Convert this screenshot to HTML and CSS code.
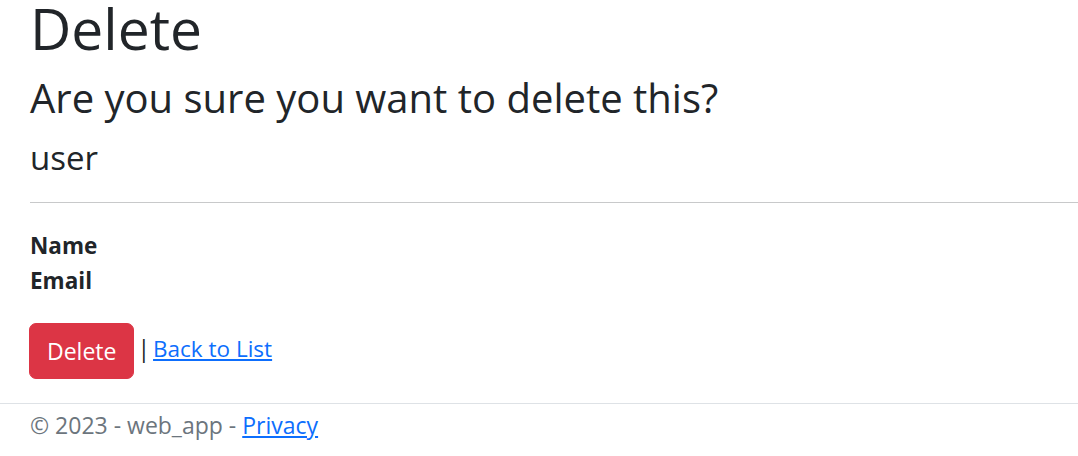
FILE: index.html
```html
<!DOCTYPE html>
<html lang="en">
<head>
<meta charset="utf-8">
<title>Delete - web_app</title>
<link rel="stylesheet" href="styles.css">
</head>
<body>
<main class="container">
  <h1 class="title">Delete</h1>
  <h3 class="question">Are you sure you want to delete this?</h3>
  <div class="details">
    <h4 class="entity">user</h4>
    <hr class="rule">
    <dl class="fields">
      <dt>Name</dt>
      <dd></dd>
      <dt>Email</dt>
      <dd></dd>
    </dl>
    <form class="actions">
      <button type="button" class="btn-danger">Delete</button> | <a href="#" class="link">Back to List</a>
    </form>
  </div>
</main>
<footer class="footer">
  <div class="footer-inner">&copy; 2023 - web_app - <a href="#" class="link">Privacy</a></div>
</footer>
</body>
</html>
```
FILE: styles.css
```css
html, body {
  margin: 0;
  padding: 0;
}
body {
  font-family: "Open Sans", "Noto Sans", "Liberation Sans", sans-serif;
  font-size: 23px;
  line-height: 35px;
  color: #212529;
  background: #fff;
}
.container {
  padding-left: 30px;
}
.title {
  margin: 0 0 18px;
  font-size: 57px;
  line-height: 56px;
  font-weight: 400;
}
.question {
  margin: 0 0 16px;
  font-size: 40px;
  line-height: 48px;
  font-weight: 400;
}
.entity {
  margin: 0;
  font-size: 33px;
  line-height: 40px;
  font-weight: 400;
}
.rule {
  margin: 24px 0 0;
  border: 0;
  border-top: 1px solid #c8c9ca;
  height: 0;
}
.fields {
  margin: 25px 0 0;
}
.fields dt {
  font-weight: 700;
  font-size: 22.5px;
  margin: 0;
}
.fields dd {
  margin: 0;
}
.actions {
  margin: 25px 0 0;
  word-spacing: -3px;
}
.btn-danger {
  display: inline-block;
  vertical-align: middle;
  margin-left: -1px;
  font-family: inherit;
  font-size: 23px;
  line-height: 36px;
  padding: 9px 17px;
  border: 1px solid #dc3545;
  border-radius: 7px;
  background: #dc3545;
  color: #fff;
  word-spacing: normal;
}
.link {
  color: #0d6efd;
  text-decoration: underline;
  word-spacing: normal;
}
.actions .link {
  font-size: 22.5px;
}
.footer {
  margin-top: 24px;
  border-top: 1px solid #dee2e6;
  color: #6c757d;
}
.footer-inner {
  padding-left: 30px;
  padding-top: 4px;
  line-height: 35px;
}
```
